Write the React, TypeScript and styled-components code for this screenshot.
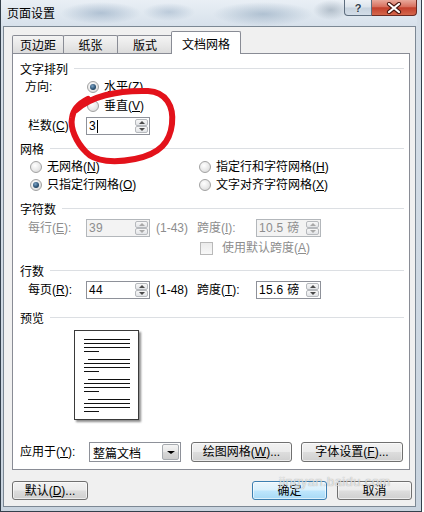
import React from 'react';
import styled, { createGlobalStyle } from 'styled-components';

const FONT = `"Liberation Sans", "Noto Sans CJK SC", sans-serif`;

const Global = createGlobalStyle`
  html, body { margin: 0; padding: 0; background: #ffffff; }
  body { font-family: ${FONT}; font-size: 12px; color: #000; }
  * { box-sizing: border-box; }
`;

const Page = styled.div`
  position: relative;
  width: 424px;
  height: 512px;
  overflow: hidden;
`;

const Window = styled.div`
  width: 422px;
  height: 512px;
  border: 1px solid #34404c;
  border-top: none;
  padding: 0 5px 4px 2px;
  background: linear-gradient(180deg, #d6dfe8 0%, #c9d4df 100%);
  display: flex;
  flex-direction: column;
`;

const TitleBar = styled.div`
  height: 26px;
  margin-left: -2px;
  margin-right: -1px;
  padding-left: 6px;
  display: flex;
  justify-content: space-between;
  align-items: flex-start;
  background:
    radial-gradient(ellipse 40px 11px at 100px 13px, rgba(118, 146, 176, 0.45), transparent),
    radial-gradient(ellipse 26px 9px at 168px 12px, rgba(118, 146, 176, 0.35), transparent),
    radial-gradient(ellipse 50px 12px at 262px 14px, rgba(105, 135, 165, 0.4), transparent),
    radial-gradient(ellipse 18px 10px at 330px 10px, rgba(90, 110, 130, 0.35), transparent),
    linear-gradient(180deg, #e9eff5 0%, #d7e1eb 100%);
`;

const TitleText = styled.span`
  margin-top: 5px;
  line-height: 15px;
  font-size: 12px;
  color: #000;
  font-family: "Noto Sans CJK SC", sans-serif;
`;

const Captions = styled.div`
  display: flex;
`;

const HelpButton = styled.div`
  width: 28px;
  height: 16px;
  border: 1px solid #5d6d7e;
  border-top: none;
  border-radius: 0 0 0 4px;
  background: linear-gradient(180deg, #eef2f6 0%, #dbe3eb 48%, #c6d2de 52%, #d3dde8 100%);
  display: flex;
  align-items: center;
  justify-content: center;
  font: bold 11px "Liberation Sans", sans-serif;
  color: #2f3d4c;
  text-shadow: 0 0 2px #ffffff;
`;

const CloseButton = styled.div`
  width: 45px;
  height: 16px;
  border: 1px solid #6c2a22;
  border-top: none;
  border-left: none;
  border-radius: 0 0 4px 0;
  background: linear-gradient(180deg, #e9a99b 0%, #d8705e 45%, #c3402c 52%, #d5674c 100%);
  display: flex;
  align-items: center;
  justify-content: center;
`;

const Client = styled.div`
  flex: 1;
  border: 1px solid #7c8894;
  background: #f0f0f0;
  padding: 5px 5px 0 8px;
  display: flex;
  flex-direction: column;
`;

const TabStrip = styled.div`
  height: 21px;
  display: flex;
  align-items: flex-end;
  position: relative;
  z-index: 1;
`;

const Tab = styled.div<{ $w: number; $first?: boolean }>`
  width: ${p => p.$w}px;
  height: 18px;
  margin-left: ${p => (p.$first ? 0 : -1)}px;
  border: 1px solid #898c95;
  border-bottom: none;
  border-radius: 2px 2px 0 0;
  background: linear-gradient(180deg, #f4f4f4 0%, #e9e9e9 50%, #dcdcdc 100%);
  display: flex;
  align-items: center;
  justify-content: center;
  font-family: "Noto Sans CJK SC", sans-serif;
  line-height: 16px;
`;

const ActiveTab = styled.div<{ $w: number }>`
  width: ${p => p.$w}px;
  height: 23px;
  margin-left: -2px;
  margin-bottom: -1px;
  padding-top: 2px;
  border: 1px solid #898c95;
  border-bottom: none;
  border-radius: 2px 2px 0 0;
  background: #ffffff;
  display: flex;
  align-items: center;
  justify-content: center;
  font-family: "Noto Sans CJK SC", sans-serif;
  line-height: 16px;
`;

const Panel = styled.div`
  height: 417px;
  border: 1px solid #898c95;
  background: #ffffff;
  padding-top: 5px;
  display: flex;
  flex-direction: column;
`;

const SectionHeader = styled.div<{ $mt: number }>`
  height: 18px;
  margin-top: ${p => p.$mt}px;
  padding-left: 7px;
  padding-right: 5px;
  display: flex;
  align-items: center;
  gap: 6px;
  white-space: nowrap;
  &::after {
    content: '';
    flex: 1;
    height: 1px;
    background: #dcdfe3;
    box-shadow: 0 1px 0 #ffffff;
  }
`;

const Row = styled.div<{ $mt: number; $pl: number; $h?: number }>`
  height: ${p => p.$h ?? 18}px;
  margin-top: ${p => p.$mt}px;
  padding-left: ${p => p.$pl}px;
  display: flex;
  align-items: center;
  white-space: nowrap;
`;

const Label = styled.span<{ $w?: number; $off?: boolean; $ml?: number }>`
  width: ${p => (p.$w ? `${p.$w}px` : 'auto')};
  flex-shrink: 0;
  margin-left: ${p => p.$ml ?? 0}px;
  color: ${p => (p.$off ? '#8d8d8d' : '#000')};
  line-height: 16px;
`;

const Key = styled.span`
  text-decoration: underline;
`;

const Option = styled.div<{ $w?: number }>`
  width: ${p => (p.$w ? `${p.$w}px` : 'auto')};
  flex-shrink: 0;
  display: flex;
  align-items: center;
  gap: 5px;
`;

const RadioDot = styled.span<{ $on?: boolean }>`
  width: 12px;
  height: 12px;
  border-radius: 50%;
  border: 1px solid #a2a2a2;
  background: radial-gradient(circle at 40% 35%, #ffffff 0%, #e8e8e8 55%, #cfcfcf 100%);
  display: flex;
  align-items: center;
  justify-content: center;
  &::after {
    content: '';
    display: ${p => (p.$on ? 'block' : 'none')};
    width: 6px;
    height: 6px;
    border-radius: 50%;
    background: radial-gradient(circle at 40% 35%, #7ea4c6 0%, #2c5476 55%, #152b3e 100%);
  }
`;

const CheckBox = styled.span`
  width: 13px;
  height: 13px;
  border: 1px solid #b9b9b9;
  background: linear-gradient(180deg, #ebebeb 0%, #f8f8f8 100%);
  flex-shrink: 0;
`;

const Field = styled.div<{ $w: number; $off?: boolean }>`
  width: ${p => p.$w}px;
  height: 18px;
  flex-shrink: 0;
  border: 1px solid ${p => (p.$off ? '#b3b7bb' : '#8e9199')};
  background: ${p => (p.$off ? '#f3f3f3' : '#ffffff')};
  display: flex;
  align-items: stretch;
`;

const FieldText = styled.span<{ $off?: boolean }>`
  flex: 1;
  padding-left: 2px;
  display: flex;
  align-items: center;
  color: ${p => (p.$off ? '#8d8d8d' : '#000')};
  line-height: 14px;
  letter-spacing: 0.3px;
`;

const Caret = styled.span`
  width: 1px;
  height: 13px;
  margin-left: 1px;
  background: #000;
`;

const Spinner = styled.div`
  width: 15px;
  padding: 1px;
  display: flex;
  flex-direction: column;
`;

const SpinButton = styled.div`
  flex: 1;
  border: 1px solid #b6b9bd;
  border-radius: 2px;
  background: linear-gradient(180deg, #f7f7f7 0%, #e2e4e7 100%);
  display: flex;
  align-items: center;
  justify-content: center;
`;

const Arrow = styled.span<{ $dir: 'up' | 'down'; $color: string; $size?: number }>`
  width: 0;
  height: 0;
  border-left: ${p => p.$size ?? 3}px solid transparent;
  border-right: ${p => p.$size ?? 3}px solid transparent;
  ${p =>
    p.$dir === 'up'
      ? `border-bottom: ${Math.ceil((p.$size ?? 3) * 0.7)}px solid ${p.$color};`
      : `border-top: ${Math.ceil((p.$size ?? 3) * 0.7)}px solid ${p.$color};`}
`;

const PreviewSheet = styled.div`
  width: 65px;
  height: 90px;
  margin-top: 4px;
  margin-left: 61px;
  border: 1px solid #3a3a3a;
  background: #ffffff;
  box-shadow: 2px 2px 2px rgba(0, 0, 0, 0.45);
  flex-shrink: 0;
`;

const Select = styled.div`
  width: 92px;
  height: 20px;
  flex-shrink: 0;
  border: 1px solid #8e9199;
  background: #ffffff;
  display: flex;
  align-items: stretch;
`;

const SelectText = styled.span`
  flex: 1;
  padding-left: 3px;
  display: flex;
  align-items: center;
  font-family: "Noto Sans CJK SC", sans-serif;
`;

const SelectButton = styled.div`
  width: 17px;
  margin: 1px;
  border: 1px solid #a7abb0;
  border-radius: 2px;
  background: linear-gradient(180deg, #f5f5f5 0%, #e6e6e6 50%, #d8d8d8 51%, #cccccc 100%);
  display: flex;
  align-items: center;
  justify-content: center;
`;

const Button = styled.div<{ $w: number; $ml?: number; $primary?: boolean }>`
  width: ${p => p.$w}px;
  height: ${p => (p.$primary !== undefined ? 19 : 20)}px;
  margin-left: ${p => p.$ml ?? 0}px;
  flex-shrink: 0;
  border: 1px solid ${p => (p.$primary ? '#3c7fb1' : '#707070')};
  border-radius: 3px;
  background: ${p =>
    p.$primary
      ? 'linear-gradient(180deg, #eaf6fd 0%, #d9f0fc 48%, #bee6fd 52%, #a7d9f5 100%)'
      : 'linear-gradient(180deg, #f2f2f2 0%, #ebebeb 48%, #dddddd 52%, #cfcfcf 100%)'};
  box-shadow: inset 0 0 0 1px rgba(255, 255, 255, 0.6);
  display: flex;
  align-items: center;
  justify-content: center;
  white-space: nowrap;
  line-height: 14px;
`;

const ButtonRow = styled.div`
  height: 19px;
  margin-top: 11px;
  margin-right: -2px;
  display: flex;
  align-items: center;
`;

const Spacer = styled.div`
  flex: 1;
`;

const Scribble = styled.svg`
  position: absolute;
  left: 60px;
  top: 80px;
  pointer-events: none;
`;

const Watermark = styled.span`
  position: absolute;
  left: 279px;
  top: 474px;
  font: 13px "Liberation Sans", sans-serif;
  letter-spacing: 0.4px;
  color: rgba(255, 255, 255, 0.7);
  text-shadow: 0 0 1px rgba(80, 80, 80, 0.6);
  pointer-events: none;
`;

function SpinBox({ off }: { off?: boolean }) {
  const c = off ? '#a8a8a8' : '#4a4a4a';
  return (
    <Spinner>
      <SpinButton>
        <Arrow $dir="up" $color={c} />
      </SpinButton>
      <SpinButton>
        <Arrow $dir="down" $color={c} />
      </SpinButton>
    </Spinner>
  );
}

function NumField({ w, value, off, caret }: { w: number; value: string; off?: boolean; caret?: boolean }) {
  return (
    <Field $w={w} $off={off}>
      <FieldText $off={off}>
        {value}
        {caret && <Caret />}
      </FieldText>
      <SpinBox off={off} />
    </Field>
  );
}

function Radio({ on, children, w }: { on?: boolean; children: React.ReactNode; w?: number }) {
  return (
    <Option $w={w}>
      <RadioDot $on={on} />
      <Label>{children}</Label>
    </Option>
  );
}

const previewLines = (() => {
  const out: { x1: number; x2: number; y: number }[] = [];
  [8, 28, 48, 68].forEach((g, gi) => {
    out.push({ x1: gi === 0 ? 9 : 13, x2: 55, y: g });
    out.push({ x1: 9, x2: 55, y: g + 4 });
    out.push({ x1: 9, x2: 55, y: g + 8 });
    out.push({ x1: 9, x2: 24, y: g + 12 });
  });
  return out;
})();

export default function App() {
  return (
    <Page>
      <Global />
      <Window>
        <TitleBar>
          <TitleText>页面设置</TitleText>
          <Captions>
            <HelpButton>?</HelpButton>
            <CloseButton>
              <svg width="16" height="12" viewBox="0 0 16 12">
                <path d="M3 2 L13 10 M13 2 L3 10" stroke="#4a1710" strokeWidth="4.2" strokeLinecap="round" />
                <path d="M3 2 L13 10 M13 2 L3 10" stroke="#ffffff" strokeWidth="2.2" strokeLinecap="round" />
              </svg>
            </CloseButton>
          </Captions>
        </TitleBar>

        <Client>
          <TabStrip>
            <Tab $w={52} $first>页边距</Tab>
            <Tab $w={55}>纸张</Tab>
            <Tab $w={56}>版式</Tab>
            <ActiveTab $w={70}>文档网格</ActiveTab>
          </TabStrip>

          <Panel>
            <SectionHeader $mt={0}>文字排列</SectionHeader>
            <Row $mt={1} $pl={12}>
              <Label $w={62}>方向:</Label>
              <Radio on>
                水平(<Key>Z</Key>)
              </Radio>
            </Row>
            <Row $mt={1} $pl={74}>
              <Radio>
                垂直(<Key>V</Key>)
              </Radio>
            </Row>
            <Row $mt={2} $pl={15}>
              <Label $w={58}>
                栏数(<Key>C</Key>)
              </Label>
              <NumField w={64} value="3" caret />
            </Row>

            <SectionHeader $mt={4}>网格</SectionHeader>
            <Row $mt={1} $pl={17}>
              <Radio w={169}>
                无网格(<Key>N</Key>)
              </Radio>
              <Radio>
                指定行和字符网格(<Key>H</Key>)
              </Radio>
            </Row>
            <Row $mt={0} $pl={17}>
              <Radio w={169} on>
                只指定行网格(<Key>O</Key>)
              </Radio>
              <Radio>
                文字对齐字符网格(<Key>X</Key>)
              </Radio>
            </Row>

            <SectionHeader $mt={5}>字符数</SectionHeader>
            <Row $mt={2} $pl={15}>
              <Label $w={58} $off>
                每行(<Key>E</Key>):
              </Label>
              <NumField w={64} value="39" off />
              <Label $w={41} $ml={6} $off>
                (1-43)
              </Label>
              <Label $w={59} $off>
                跨度(<Key>I</Key>):
              </Label>
              <NumField w={65} value="10.5 磅" off />
            </Row>
            <Row $mt={2} $pl={187}>
              <CheckBox />
              <Label $ml={9} $off>
                使用默认跨度(<Key>A</Key>)
              </Label>
            </Row>

            <SectionHeader $mt={4}>行数</SectionHeader>
            <Row $mt={2} $pl={15}>
              <Label $w={58}>
                每页(<Key>R</Key>):
              </Label>
              <NumField w={64} value="44" />
              <Label $w={41} $ml={6}>
                (1-48)
              </Label>
              <Label $w={59}>
                跨度(<Key>T</Key>):
              </Label>
              <NumField w={65} value="15.6 磅" />
            </Row>

            <SectionHeader $mt={9}>预览</SectionHeader>
            <PreviewSheet>
              <svg width="63" height="88" viewBox="0 0 63 88" shapeRendering="crispEdges">
                {previewLines.map((l, i) => (
                  <line key={i} x1={l.x1} x2={l.x2} y1={l.y + 0.5} y2={l.y + 0.5} stroke="#111" strokeWidth="1" />
                ))}
              </svg>
            </PreviewSheet>

            <Row $mt={22} $pl={7} $h={20}>
              <Label $w={69}>
                应用于(<Key>Y</Key>):
              </Label>
              <Select>
                <SelectText>整篇文档</SelectText>
                <SelectButton>
                  <Arrow $dir="down" $color="#000" $size={4} />
                </SelectButton>
              </Select>
              <Button $w={101} $ml={10}>
                绘图网格(<Key>W</Key>)...
              </Button>
              <Button $w={102} $ml={9}>
                字体设置(<Key>F</Key>)...
              </Button>
            </Row>
          </Panel>

          <ButtonRow>
            <Button $w={76} $primary={false}>
              默认(<Key>D</Key>)...
            </Button>
            <Spacer />
            <Button $w={75} $primary>
              确定
            </Button>
            <Button $w={75} $ml={10} $primary={false}>
              取消
            </Button>
          </ButtonRow>
        </Client>
      </Window>

      <Scribble width="125" height="95" viewBox="60 80 125 95">
        <path
          d="M76 110 C 90 97, 116 90, 148 91 C 166 92, 174 106, 172 124 C 170 142, 160 154, 135 159 C 115 163, 95 162, 86 152 C 76 142, 70 128, 72 118 C 73 110, 78 104, 88 99"
          fill="none"
          stroke="#e3121b"
          strokeWidth="6"
          strokeLinecap="round"
          strokeLinejoin="round"
        />
      </Scribble>
      <Watermark>jingyan.baidu.com</Watermark>
    </Page>
  );
}
